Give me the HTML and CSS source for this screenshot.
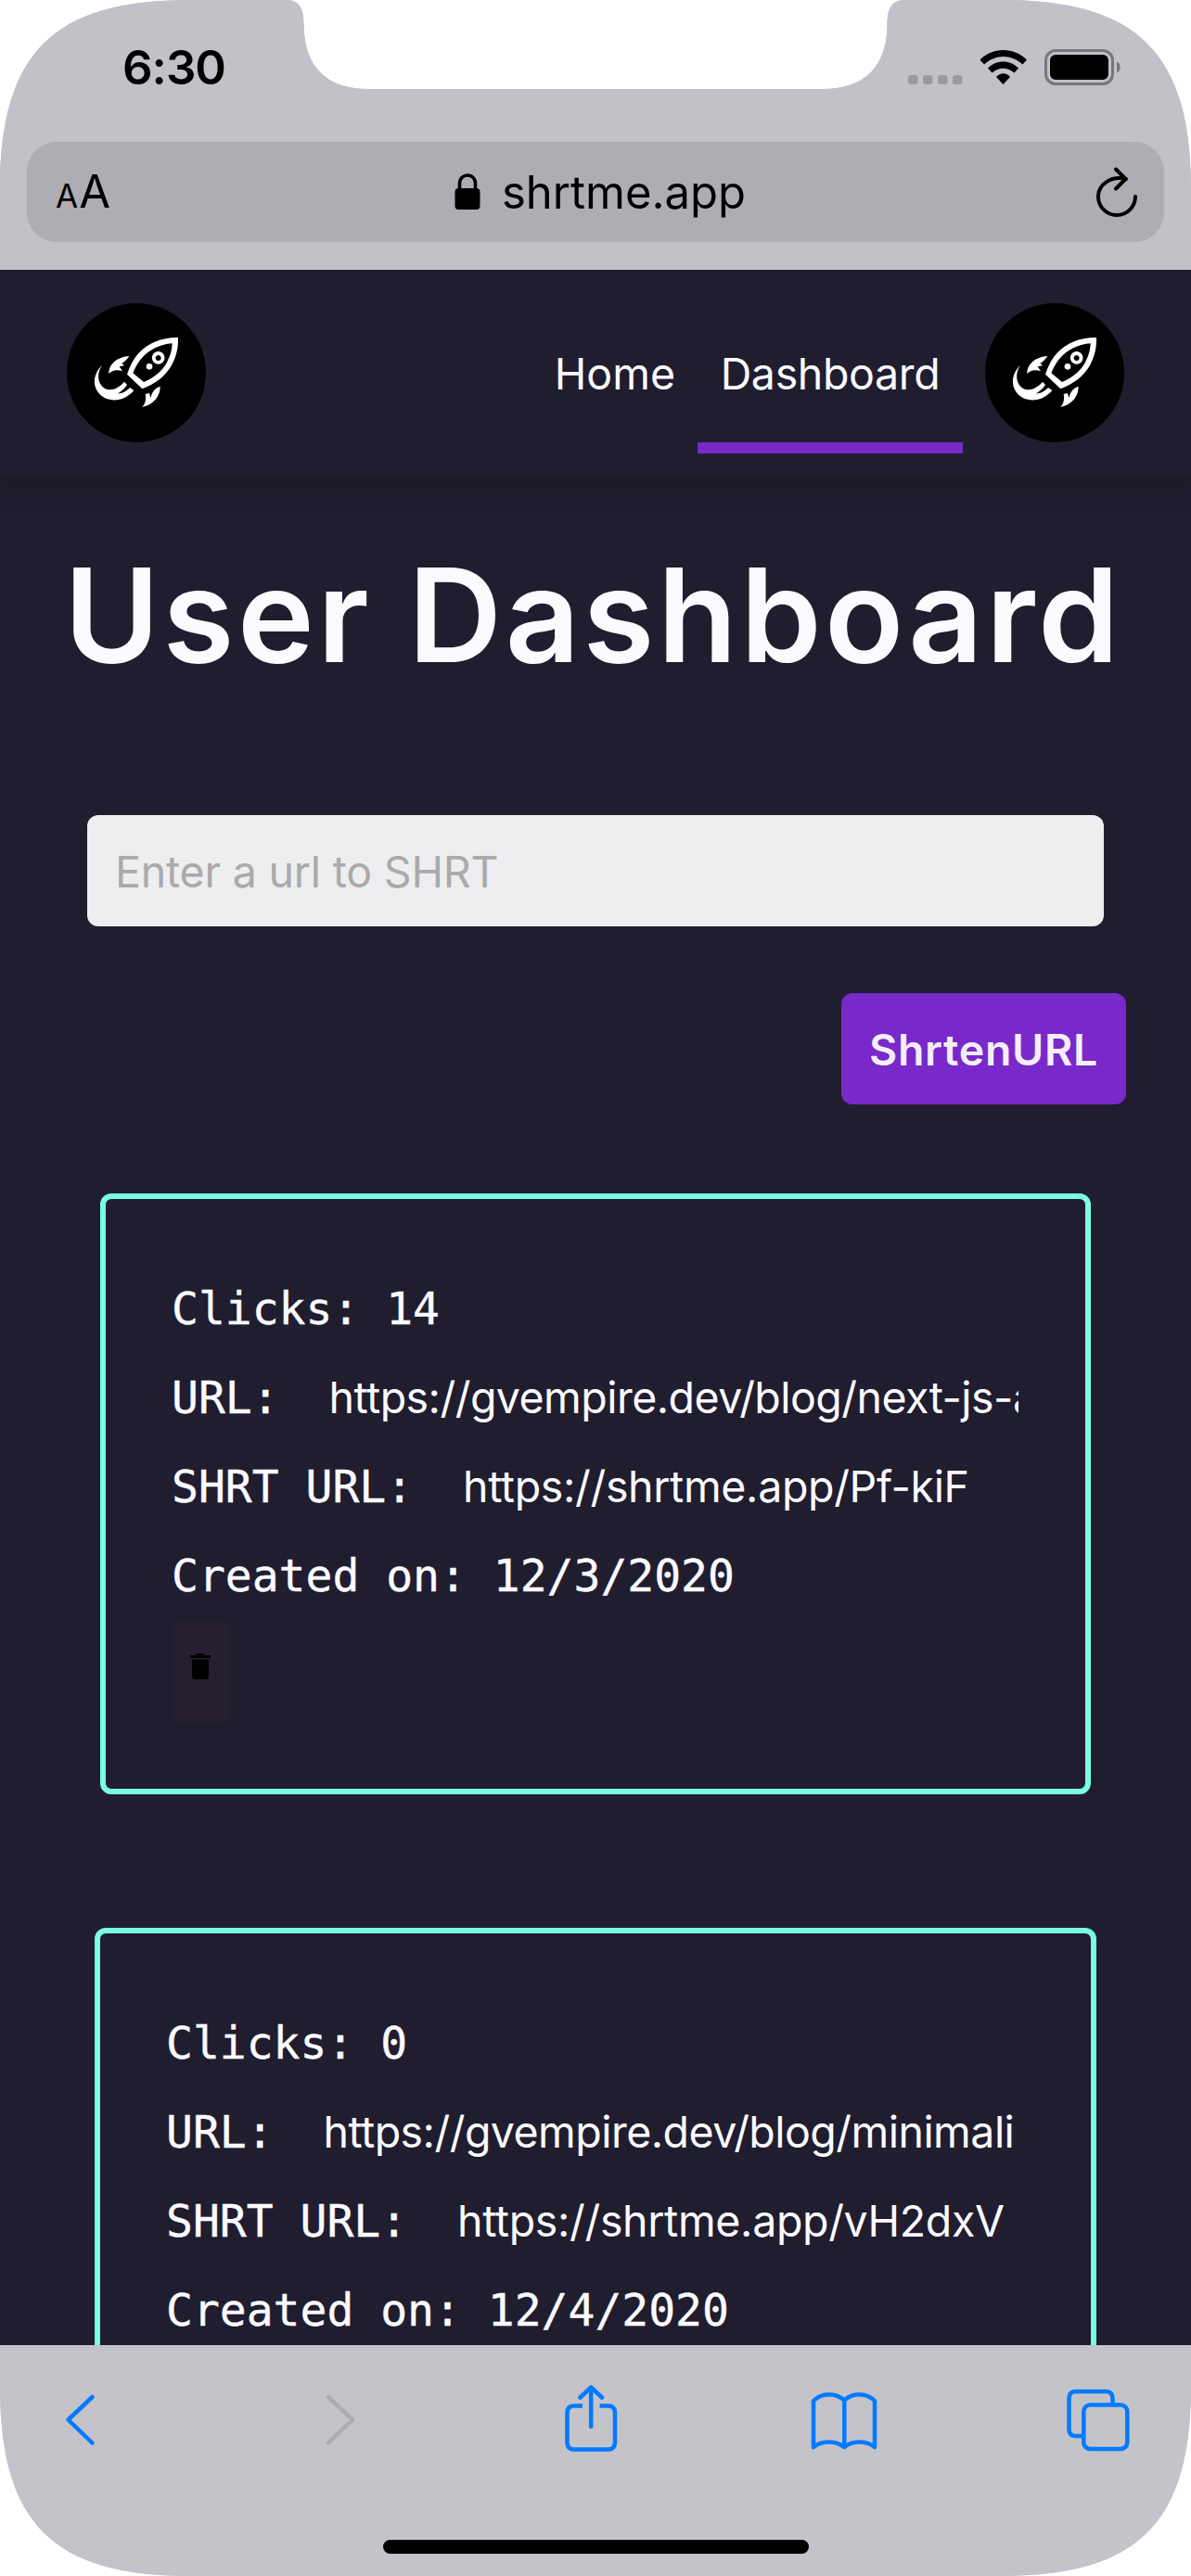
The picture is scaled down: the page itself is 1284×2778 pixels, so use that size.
FILE: index.html
```html
<!DOCTYPE html>
<html lang="en">
<head>
<meta charset="utf-8">
<title>shrtme.app</title>
<link rel="stylesheet" href="styles.css">
</head>
<body>
<svg class="defs" width="0" height="0" aria-hidden="true">
  <symbol id="rocket" viewBox="36 51 450 450">
    <path fill-rule="evenodd" d="M396 162C342 161 300 180 270 211C248 234 239 260 231 281L280 328C320 312 353 290 375 252C392 220 397 192 396 162ZM377 181C335 184 302 203 281 226C264 245 257 262 250 277L285 306C322 289 345 270 360 242C373 217 376 200 377 181Z"/>
    <path fill-rule="evenodd" d="M332 207a20.500 20.500 0 1 0 .01 0ZM332 219a9 9 0 1 1-.01 0Z"/>
    <circle cx="303" cy="256" r="10"/>
    <path d="M238 222C203 224 172 245 172 279C182 267 197 265 216 270L206 256L222 253L214 245C221 242 228 236 238 222Z"/>
    <path d="M149 252C125 277 118 309 135 336C153 363 187 370 216 360C233 353 245 343 253 333L240 324C228 337 216 342 200 344C213 336 224 327 231 315L222 305C205 325 180 338 158 326C136 312 132 281 149 252Z"/>
    <path d="M338 320C338 345 325 376 280 387C291 375 293 361 290 345L303 342L307 358C311 340 318 327 338 320Z"/>
  </symbol>
</svg>
<div class="screen">
  <div class="chrome">
    <div class="status">
      <span class="time">6:30</span>
      <svg class="status-icons" width="232" height="50" viewBox="976 50 232 50">
        <g fill="#9b9aa0"><rect x="979" y="81" width="10.500" height="10" rx="3"/><rect x="995" y="81" width="10.500" height="10" rx="3"/><rect x="1011" y="81" width="10.500" height="10" rx="3"/><rect x="1027" y="81" width="10.500" height="10" rx="3"/></g>
        <path d="M1056.500 64.500C1070 50.500 1093 50.500 1107 64.500L1102.500 69.500C1090 58 1073.500 58 1061 69.500ZM1065 73.500C1074 64 1089 64 1098 73.500L1093.500 78.500C1086 72 1077 72 1069.500 78.500ZM1074 83C1078.500 78 1085 78 1089 83L1081.500 91Z"/>
        <rect x="1127.500" y="54.500" width="72" height="36" rx="10.500" fill="none" stroke="#77767b" stroke-width="3"/>
        <rect x="1132" y="59" width="63" height="27" rx="6"/>
        <path d="M1204 66.500C1209 68.500 1209 76.500 1204 78.500Z" fill="#77767b"/>
      </svg>
    </div>
    <div class="address">
      <span class="aa"><span class="small-a">A</span><span class="big-a">A</span></span>
      <span class="host">
        <svg width="28" height="40" viewBox="0 0 28 40"><path d="M5.500 18V11C5.500-1 22.500-1 22.500 11V18" fill="none" stroke="#000" stroke-width="3.600"/><rect x=".5" y="16" width="27" height="23" rx="4"/></svg>
        <span class="host-name">shrtme.app</span>
      </span>
      <svg class="reload" width="48" height="58" viewBox="1180 178 48 58" fill="none" stroke="#000" stroke-width="4" stroke-linecap="round" stroke-linejoin="round"><path d="M1214 193C1198 189 1184 199 1184 212A20 20 0 0 0 1224 212M1203 182.500L1213.500 193L1203 203.500"/></svg>
    </div>
  </div>
  <main class="page">
    <header class="nav">
      <svg class="logo"><use href="#rocket"/></svg>
      <nav class="links">
        <a class="tab home">Home</a>
        <a class="tab active"><span>Dashboard</span></a>
        <svg class="logo"><use href="#rocket"/></svg>
      </nav>
    </header>
    <h1 class="title">User Dashboard</h1>
    <form class="shorten">
      <input class="url" type="text" placeholder="Enter a url to SHRT">
      <button class="submit" type="button">ShrtenURL</button>
    </form>
    <section class="card">
      <p class="row">Clicks: 14</p>
      <p class="row">URL: <a class="link long">https://gvempire.dev/blog/next-js-a</a></p>
      <p class="row">SHRT URL: <a class="link">https://shrtme.app/Pf-kiF</a></p>
      <p class="row">Created on: 12/3/2020</p>
      <button class="trash" type="button" aria-label="Delete"><svg width="22" height="28" viewBox="0 0 22 28"><path d="M0 2H6L7.500 0H14.500L16 2H22V5H0ZM2 6.500H20V25Q20 28 17 28H5Q2 28 2 25Z"/></svg></button>
    </section>
    <section class="card wide">
      <p class="row">Clicks: 0</p>
      <p class="row">URL: <a class="link long">https://gvempire.dev/blog/minimali</a></p>
      <p class="row">SHRT URL: <a class="link">https://shrtme.app/vH2dxV</a></p>
      <p class="row">Created on: 12/4/2020</p>
    </section>
  </main>
  <footer class="toolbar">
    <div class="actions">
      <svg width="36" height="60" viewBox="68 2580 36 60"><path d="M99.500 2585L73.500 2609.500L99.500 2634.500"/></svg>
      <svg class="off" width="36" height="60" viewBox="350 2580 36 60"><path d="M354 2585L380 2609.500L354 2634.500"/></svg>
      <svg width="60" height="76" viewBox="607 2572 60 76"><path stroke-linecap="butt" d="M628 2594.500H619Q611.500 2594.500 611.500 2602V2634Q611.500 2641.500 619 2641.500H655.500Q663 2641.500 663 2634V2602Q663 2594.500 655.500 2594.500H646.500"/><path d="M637.200 2617V2574.500M625.500 2585.500L637.200 2574.500L649 2585.500"/></svg>
      <svg width="74" height="66" viewBox="873 2577 74 66"><path d="M877 2639V2589C886 2580 901 2580 910.300 2588.500C919 2580 934 2580 943 2589V2639C934 2631.500 919 2631.500 910.300 2639C901 2631.500 886 2631.500 877 2639ZM910.300 2588.500V2639"/></svg>
      <svg width="72" height="70" viewBox="1148 2575 72 70"><path stroke-linecap="butt" d="M1167 2627H1160Q1152.500 2627 1152.500 2619.500V2586.500Q1152.500 2579 1160 2579H1192Q1199.500 2579 1199.500 2586.500V2593"/><rect x="1168.300" y="2593.500" width="47" height="47.500" rx="7"/></svg>
    </div>
    <div class="indicator"></div>
  </footer>
</div>
</body>
</html>
```
FILE: styles.css
```css
* { box-sizing: border-box; }
body { margin: 0; background: #fff; font-family: Inter, "Liberation Sans", sans-serif; }
.defs { display: block; }
.screen {
  width: 1284px; height: 2778px; overflow: hidden;
  display: flex; flex-direction: column;
  background: #c2c1c7;
  clip-path: path("M0 205C0 57 57 0 205 0H308C322 0 327.500 8 327.500 27C328 70 350 96 397 96H887C934 96 956 70 956.500 27C956.500 8 962 0 976 0H1079C1227 0 1284 57 1284 205V2573C1284 2721 1227 2778 1079 2778H205C57 2778 0 2721 0 2573Z");
}
.chrome { flex: none; height: 291px; background: #c2c1c7; }
.status { height: 153px; padding: 0 76px 0 132px; display: flex; justify-content: space-between; align-items: flex-start; }
.status-icons { margin-top: 50px; }
.time { margin-top: 43px; line-height: 60px; font-size: 51px; font-weight: 600; letter-spacing: -1px; }
.address {
  height: 108px; margin: 0 29px; padding: 0 27px 0 31px; border-radius: 32px;
  background: #aeadb3; display: grid; grid-template-columns: 1fr auto 1fr; align-items: center;
}
.aa { display: flex; align-items: baseline; line-height: 60px; padding-top: 3px; }
.small-a { font-size: 35px; }
.big-a { font-size: 49px; margin-left: 1px; letter-spacing: -1px; }
.host { display: flex; align-items: center; gap: 23px; padding: 0 0 0 6px; font-size: 49px; }
.host-name { line-height: 60px; padding-top: 2px; }
.reload { justify-self: end; }

.page { flex: none; height: 2238px; overflow: hidden; background: #201d2f; color: #fafaff; }
.nav {
  height: 222px; padding: 36px 72px 24px; display: flex; justify-content: space-between;
  box-shadow: 0 12px 24px rgba(20, 16, 16, .28);
}
.logo { width: 150px; height: 150px; border-radius: 50%; background: #000; fill: #fff; }
.links { display: flex; }
.tab { height: 162px; font-size: 46.500px; line-height: 152px; text-align: center; white-space: nowrap; }
.home { padding: 0 24px; }
.active { width: 286px; margin-right: 24px; border-bottom: 12px solid #7928ca; letter-spacing: -.35px; }
.title { margin: 57px 0 0; height: 186px; line-height: 186px; padding-left: 69px; font-size: 140px; font-weight: 600; letter-spacing: 3.500px; white-space: nowrap; }
.shorten { display: flex; flex-direction: column; margin: 123px 70px 96px 94px; gap: 72px; }
.url {
  width: 1096px; height: 120px; padding: 2px 30px 0; border: 0; border-radius: 12px;
  background: #eeeef0; font: 46.500px Inter, sans-serif; letter-spacing: -.2px;
}
.url::placeholder { color: #aaa; opacity: 1; }
.submit {
  align-self: flex-end; width: 307px; height: 120px; padding: 2px 0 0; border: 0; border-radius: 12px;
  background: #7928ca; color: #f4eefb; font: 600 46.500px Inter, sans-serif; letter-spacing: .7px;
}
.card { width: 1068px; height: 648px; margin: 0 auto 144px; padding: 72px; border: 6px solid #79ffe1; border-radius: 12px; }
.wide { width: 1080px; }
.row {
  margin: 0; height: 96px; line-height: 93px; overflow: hidden; white-space: nowrap; text-indent: -1px;
  font-family: "DejaVu Sans Mono", monospace; font-size: 48px; -webkit-text-stroke: .4px;
}
.link { padding-left: 25px; font-family: Inter, sans-serif; font-size: 46.500px; letter-spacing: -.35px; -webkit-text-stroke: 0; }
.long { letter-spacing: -.54px; }
.trash { display: flex; justify-content: center; align-items: flex-start; width: 60px; height: 108px; padding: 34px 0 0; border: 0; background: #251f30; }

.toolbar { flex: none; height: 249px; background: #c3c3c9; }
.actions {
  height: 162px; padding-left: 68px; display: grid; grid-template-columns: 282px 257px 266px 275px 72px; align-items: center;
  fill: none; stroke: #007aff; stroke-width: 4.500; stroke-linecap: round; stroke-linejoin: round;
}
.off { stroke: #ababb0; }
.indicator { width: 459px; height: 15px; margin: 48px auto 0; border-radius: 8px; background: #000; }
```
